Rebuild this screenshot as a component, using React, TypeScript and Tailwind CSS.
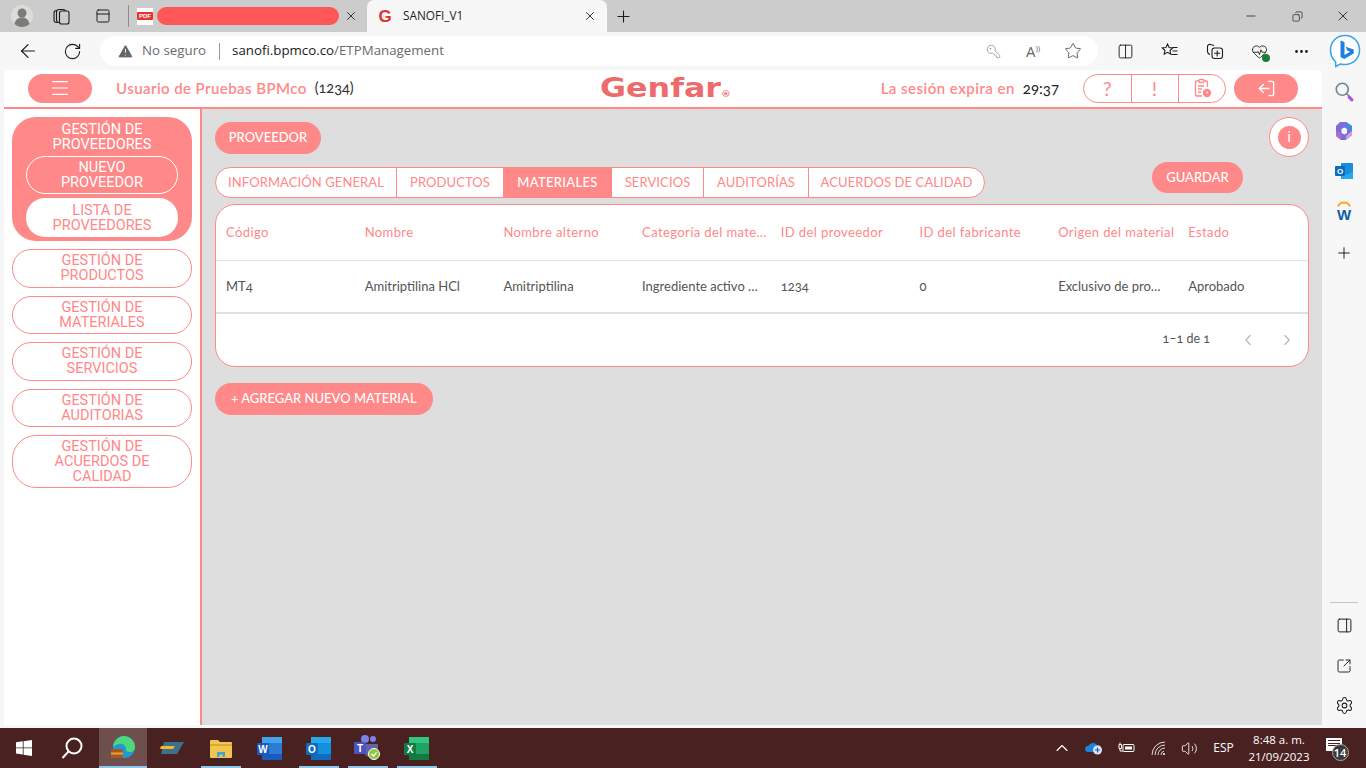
import React from "react";
import {
  ArrowLeft, RotateCw, TriangleAlert, KeyRound, Star, Columns2, HeartPulse, MoreHorizontal, Search, Plus,
  PanelRight, SquareArrowOutUpRight, Settings, ChevronUp, ChevronLeft, ChevronRight, Volume2, X, Minus,
  Copy, PanelTop, LogOut, Menu,
} from "lucide-react";

const Slot = ({ w, children, className = "" }: { w: number; children?: React.ReactNode; className?: string }) => (
  <div style={{ width: w }} className={"flex shrink-0 items-center justify-center " + className}>{children}</div>
);

const RW = "font-['Lato','Open_Sans',sans-serif] [font-variant-numeric:oldstyle-nums]";
const RB = "font-['Roboto',sans-serif]";

function TabStrip() {
  return (
    <div className="flex h-8 shrink-0 items-center bg-[#cccccc] text-[#1c1c1c]">
      <Slot w={44}>
        <svg width="22" height="22" viewBox="0 0 22 22">
          <circle cx="11" cy="11" r="11" fill="#dcdcd8" />
          <circle cx="11" cy="8" r="4.5" fill="#7b7b78" />
          <path d="M3.5 19c1-5 4-6.5 7.5-6.5s6.500 1.500 7.500 6.500c-2 2-5 3-7.500 3s-5.500-1-7.500-3z" fill="#7b7b78" />
        </svg>
      </Slot>
      <Slot w={34}>
        <svg width="17" height="17" viewBox="0 0 17 17" fill="#cccccc" stroke="#1c1c1c" strokeWidth="1.100">
          <rect x="1" y="2.500" width="9" height="12" rx="2.500" />
          <rect x="3.500" y="1.500" width="9" height="13" rx="2.500" />
          <rect x="6.500" y="3" width="9.500" height="13" rx="2" />
        </svg>
      </Slot>
      <Slot w={50}><PanelTop size={16} strokeWidth={1.5} /></Slot>
      <div className="h-[22px] w-px bg-[#8d8d8d]" />
      <div className="ml-[8px] flex h-[17px] w-[16px] items-center justify-center bg-white">
        <span className="w-full rounded-[1px] bg-[#e3342f] text-center font-['Liberation_Sans',sans-serif] text-[6px] font-bold leading-[8px] text-white">PDF</span>
      </div>
      <div className="ml-[4px] h-[18px] w-[182px] rounded-[9px] bg-[#ff5757]" />
      <Slot w={24}><X size={14} strokeWidth={1.7} className="text-[#333]" /></Slot>
      <div className="ml-[4px] flex h-8 w-[240px] items-center rounded-t-[7px] bg-[#f7f7f7]">
        <span className="ml-[10px] w-[16px] text-center font-['Liberation_Sans',sans-serif] text-[17px] font-bold leading-none text-[#e53030]">G</span>
        <span className="ml-[10px] font-['Open_Sans',sans-serif] text-[11.800px] text-[#222]">SANOFI_V1</span>
        <div className="ml-auto mr-[5px] flex w-[24px] justify-center"><X size={14} strokeWidth={1.7} className="text-[#333]" /></div>
      </div>
      <Slot w={34}><Plus size={19} strokeWidth={1.4} className="-translate-x-px" /></Slot>
      <div className="ml-auto flex">
        <Slot w={46}><Minus size={14} strokeWidth={1.3} /></Slot>
        <Slot w={46}><Copy size={11} strokeWidth={1.5} className="-scale-x-100" /></Slot>
        <Slot w={46}><X size={16} strokeWidth={1.3} /></Slot>
      </div>
    </div>
  );
}

function Toolbar() {
  return (
    <div className="flex h-[38px] shrink-0 items-start bg-[#f7f7f7] pt-[4px] text-[#1c1c1c]">
      <Slot w={56} className="h-[30px]"><ArrowLeft size={22} strokeWidth={1.3} /></Slot>
      <Slot w={32} className="h-[30px]"><RotateCw size={19} strokeWidth={1.4} /></Slot>
      <div className="ml-[12px] flex h-[30px] w-[998px] items-center rounded-full bg-white font-['Open_Sans',sans-serif] text-[13.300px]">
        <TriangleAlert size={17} fill="#666" stroke="#fff" strokeWidth={1.4} className="ml-[17px]" />
        <span className="ml-[8px] text-[#6b6b6b]">No seguro</span>
        <div className="ml-[13px] h-[17px] w-px bg-[#9a9a9a]" />
        <span className="ml-[12px] text-[#1a1a1a]">sanofi.bpmco.co<span className="text-[#6b6b6b]">/ETPManagement</span></span>
        <div className="ml-auto mr-[5px] flex text-[#8a8a8a]">
          <Slot w={40}><KeyRound size={15} strokeWidth={1.2} className="-scale-x-100" /></Slot>
          <Slot w={40}><span className="font-['Open_Sans',sans-serif] text-[15px] leading-none text-[#666]">A<span className="align-super text-[8px]">))</span></span></Slot>
          <Slot w={40}><Star size={18} strokeWidth={1.2} className="text-[#555]" /></Slot>
        </div>
      </div>
      <div className="ml-[4px] flex h-[30px] items-center">
        <Slot w={46}><Columns2 size={17} strokeWidth={1.3} /></Slot>
        <Slot w={44}>
          <svg width="18" height="18" viewBox="0 0 18 18" fill="none" stroke="#1c1c1c" strokeWidth="1.100">
            <path d="M6.500 2l1.600 3.600 3.600.4-2.700 2.500.8 3.700-3.300-1.900-3.300 1.900.8-3.700L1.300 6l3.600-.4z" />
            <path d="M11.500 5.500h5M11.500 9h5M10.500 12.500h6" />
          </svg>
        </Slot>
        <Slot w={46}>
          <svg width="18" height="18" viewBox="0 0 18 18" fill="none" stroke="#1c1c1c" strokeWidth="1.100">
            <path d="M4 12.500c-1.500-.5-2.500-1.200-2.500-3V4.500C1.500 3 3 2 4.500 2.500L8 3.500" />
            <rect x="6" y="6" width="10.500" height="10.500" rx="2.500" />
            <path d="M11.200 8.500v6M8.200 11.250h6" />
          </svg>
        </Slot>
        <Slot w={42}>
          <div className="relative">
            <HeartPulse size={17} strokeWidth={1.2} />
            <div className="absolute -bottom-[2px] -right-[2px] h-[8px] w-[8px] rounded-full bg-[#1b7f37]" />
          </div>
        </Slot>
        <Slot w={43}><MoreHorizontal size={17} strokeWidth={2} /></Slot>
        <Slot w={43}>
          <svg width="32" height="34" viewBox="0 0 32 34">
            <path d="M16 1.500C7.500 1.500 1.500 8 1.500 16c0 5 2 9 5 11.500l.3 5 5-2.600c1.400.4 2.800.6 4.200.6 8.500 0 14.500-6.500 14.500-14.500S24.500 1.500 16 1.500z" fill="#fff" stroke="#38a7ee" strokeWidth="1.600" />
            <path d="M11.500 6.500l4 1.500v13l5.500-3.200-2.800-1.300-1.500-3.800 8 2.800v4l-9.500 5.500-3.700-2z" fill="#1f7fe0" />
          </svg>
        </Slot>
      </div>
    </div>
  );
}

const navItems = [
  ["GESTIÓN DE", "PRODUCTOS"],
  ["GESTIÓN DE", "MATERIALES"],
  ["GESTIÓN DE", "SERVICIOS"],
  ["GESTIÓN DE", "AUDITORIAS"],
  ["GESTIÓN DE", "ACUERDOS DE", "CALIDAD"],
];

function Sidebar() {
  return (
    <aside className={"flex w-[198px] shrink-0 flex-col gap-[8px] border-r-2 border-[#ff8888] bg-white px-[8px] pt-[8px] text-center text-[14.500px] leading-[15px] " + RB}>
      <div className="flex h-[124px] flex-col items-center rounded-[24px] bg-[#ff8888] px-[14px] pt-[5px] text-white">
        <div>GESTIÓN DE<br />PROVEEDORES</div>
        <div className="mt-[4px] flex h-[38px] w-full items-center justify-center rounded-[19px] border border-white">
          <span>NUEVO<br />PROVEEDOR</span>
        </div>
        <div className="mt-[4px] flex h-[39px] w-full items-center justify-center rounded-[19px] bg-white text-[#ff8888]">
          <span>LISTA DE<br />PROVEEDORES</span>
        </div>
      </div>
      {navItems.map((lines) => (
        <div key={lines[1]} className={"flex items-center justify-center border border-[#ff8888] bg-white text-[#ff8888] " + (lines.length === 3 ? "h-[53px] rounded-[24px]" : "h-[38.500px] rounded-[19px]")}>
          <span>{lines.map((l, i) => <React.Fragment key={l}>{i > 0 && <br />}{l}</React.Fragment>)}</span>
        </div>
      ))}
    </aside>
  );
}

const tabs = [
  ["INFORMACIÓN GENERAL", 181],
  ["PRODUCTOS", 107],
  ["MATERIALES", 108],
  ["SERVICIOS", 92],
  ["AUDITORÍAS", 105],
  ["ACUERDOS DE CALIDAD", 176],
] as const;

const headers = ["Código", "Nombre", "Nombre alterno", "Categoría del material", "ID del proveedor", "ID del fabricante", "Origen del material", "Estado"];
const cells = ["MT4", "Amitriptilina HCl", "Amitriptilina", "Ingrediente activo farmacéutico", "1234", "0", "Exclusivo de proveedor", "Aprobado"];
const gridCols = "grid grid-cols-[repeat(6,138.7px)_130px_1fr] px-[10px]";

function Content() {
  return (
    <main className={"flex min-w-0 flex-1 flex-col bg-[#dedede] pl-[13px] pr-[13px] pt-[8px] " + RW}>
      <div className="flex items-start justify-between">
        <button className="mt-[5px] h-[32px] w-[106px] rounded-full bg-[#ff8888] text-[13px] font-medium text-white">PROVEEDOR</button>
        <div className="flex h-[40px] w-[40px] items-center justify-center rounded-full border border-[#ff8888] bg-white">
          <div className="flex h-[23px] w-[23px] items-center justify-center rounded-full bg-[#ff8888] font-['Roboto',sans-serif] text-[15px] font-normal leading-none text-white">i</div>
        </div>
      </div>
      <div className="mt-[5px] flex h-[42px] items-start justify-between">
        <div className="mt-[5px] flex h-[31px] overflow-hidden rounded-full border border-[#ff8888] bg-white text-[13px] tracking-[0.1px]">
          {tabs.map(([t, w], i) => (
            <div key={t} style={{ width: w - (i === 0 ? 1 : 0) }} className={"flex items-center justify-center " + (i > 0 ? "border-l border-[#ff8888] " : "") + (t === "MATERIALES" ? "bg-[#ff8888] font-medium tracking-[0.3px] text-white" : "text-[#ff8888]")}>{t}</div>
          ))}
        </div>
        <button className="mr-[66px] h-[31px] w-[91px] rounded-full bg-[#ff8888] text-[13px] font-medium text-white">GUARDAR</button>
      </div>
      <section className="h-[163px] w-[1094px] overflow-hidden rounded-[20px] border border-[#ff8888] bg-white text-[13px]">
        <div className={gridCols + " h-[56px] items-center border-b border-[#e0e0e0] tracking-[0.4px] text-[#ff8888]"}>
          {headers.map((h, i) => <div key={h} className={i === 3 ? "truncate pr-[11px]" : "truncate"}>{h}</div>)}
        </div>
        <div className={gridCols + " h-[53px] items-center border-b-2 border-[#e0e0e0] text-[#555]"}>
          {cells.map((c, i) => <div key={c} className={"truncate " + (i === 3 ? "pr-[20px]" : i === 6 ? "pr-[26px]" : "")}>{c}</div>)}
        </div>
        <div className="flex h-[51px] items-center justify-end text-[#555]">
          <span className="text-[12.500px]">1–1 de 1</span>
          <ChevronLeft size={18} strokeWidth={1.5} className="ml-[29px] text-[#b4b4b4]" />
          <ChevronRight size={18} strokeWidth={1.5} className="ml-[21px] mr-[12px] text-[#b4b4b4]" />
        </div>
      </section>
      <button className="mt-[16px] h-[32px] w-[218px] rounded-full bg-[#ff8888] text-[13px] font-medium text-white">+ AGREGAR NUEVO MATERIAL</button>
    </main>
  );
}

function Header() {
  return (
    <header className={"flex h-[39px] shrink-0 items-center border-b-2 border-[#ff8888] bg-white pb-[3px] pt-[2px] " + RW}>
      <div className="flex w-[596px] shrink-0 items-center pl-[24px]">
        <div className="flex h-[29px] w-[64px] items-center justify-center rounded-full bg-[#ff8888]">
          <Menu size={22} strokeWidth={1.3} className="text-white" />
        </div>
        <span className="ml-[24px] text-[15px] font-semibold tracking-[0.42px] text-[#ff8888]">Usuario de Pruebas BPMco</span>
        <span className="ml-[8px] text-[14.500px] text-[#333]">(1234)</span>
      </div>
      <div className="flex w-[130px] origin-left scale-x-[1.22] items-baseline font-['DejaVu_Sans',sans-serif] text-[26px] font-bold leading-none text-[#ee6b6b]">
        Genfar<span className="text-[8px] leading-none">®</span>
      </div>
      <div className="ml-auto flex items-center pr-[24px]">
        <span className="text-[15px] font-semibold tracking-[0.47px] text-[#ff8888]">La sesión expira en</span>
        <span className="ml-[8px] text-[15px] text-[#222]">29:37</span>
        <div className="ml-[24px] flex h-[29px] w-[143px] overflow-hidden rounded-full border border-[#ff8888] text-[#ff8888]">
          <div className="flex flex-1 items-center justify-center text-[20px] font-normal leading-none">?</div>
          <div className="flex w-[48px] items-center justify-center border-x border-[#ff8888] text-[20px] leading-none">!</div>
          <div className="flex flex-1 items-center justify-center">
            <svg width="20" height="20" viewBox="0 0 20 20" fill="none" stroke="#ff8888" strokeWidth="1.300">
              <rect x="7" y="1.500" width="5" height="3" rx="1" />
              <path d="M7 3H4.500A1 1 0 0 0 3.500 4v13a1 1 0 0 0 1 1H10M12 3h2.500a1 1 0 0 1 1 1v5" />
              <path d="M6 8h6M6 11h4M6 14h3" />
              <circle cx="15" cy="15" r="3.500" fill="#ff8888" />
              <path d="M15 13.500V15h1.300" stroke="#fff" strokeWidth="0.900" />
            </svg>
          </div>
        </div>
        <div className="ml-[8px] flex h-[29px] w-[64px] items-center justify-center rounded-full bg-[#ff8888]">
          <LogOut size={19} strokeWidth={1.8} className="-scale-x-100 text-white" />
        </div>
      </div>
    </header>
  );
}

function Rail() {
  return (
    <div className="flex w-[44px] shrink-0 flex-col items-center justify-between pb-[10px] pt-[11px] text-[#1c1c1c]">
      <div className="flex flex-col items-center gap-[19px]">
        <div className="relative h-[20px] w-[20px]">
          <Search size={18} strokeWidth={2.200} className="text-[#6f8794]" />
          <div className="absolute bottom-[1px] right-[0px] h-[3px] w-[7px] rotate-45 rounded-full bg-[#b14fd0]" />
        </div>
        <svg width="22" height="22" viewBox="0 0 22 22">
          <path d="M7 2h6l6 4v9l-6 5H8l-5-4V6z" fill="#7a6fd6" />
          <path d="M13 2l6 4v5l-6-3z" fill="#3f8be0" />
          <path d="M3 11l5 3v6l-5-4z" fill="#b36bd8" />
          <path d="M13 16l6-5v4l-6 5z" fill="#d89ad8" />
          <path d="M8.500 9l3-1.500L14 9v4l-2.500 1.500L8.500 13z" fill="#f7f7f7" />
        </svg>
        <svg width="20" height="20" viewBox="0 0 20 20">
          <rect x="7" y="2" width="12" height="16" rx="1" fill="#1490df" />
          <path d="M7 10l6 4 6-4v8H7z" fill="#28a8ea" />
          <rect x="1" y="5" width="10" height="10" rx="1" fill="#0f6cbd" />
          <text x="6" y="13" textAnchor="middle" fontSize="8" fontWeight="700" fontFamily="Liberation Sans, sans-serif" fill="#fff">O</text>
        </svg>
        <svg width="22" height="22" viewBox="0 0 22 22">
          <path d="M5 6.500a6.500 6.500 0 0 1 12 0" fill="none" stroke="#f5a623" strokeWidth="1.800" />
          <text x="11" y="20" textAnchor="middle" fontSize="15" fontWeight="700" fontFamily="Liberation Sans, sans-serif" fill="#0b5cab">W</text>
        </svg>
        <Plus size={18} strokeWidth={1.300} className="mt-[3px]" />
      </div>
      <div className="flex flex-col items-center">
        <div className="mb-[14px] h-px w-[28px] bg-[#c4c4c4]" />
        <PanelRight size={17} strokeWidth={1.400} />
        <SquareArrowOutUpRight size={16} strokeWidth={1.400} className="mt-[24px]" />
        <Settings size={19} strokeWidth={1.300} className="mt-[22px]" />
      </div>
    </div>
  );
}

const Task = ({ w, on, active, children }: { w: number; on?: boolean; active?: boolean; children?: React.ReactNode }) => (
  <div style={{ width: w }} className={"relative flex h-full shrink-0 items-center justify-center " + (active ? "bg-[#6f4f4d]" : "")}>
    {children}
    {on && <div className="absolute bottom-0 left-1/2 h-[2px] w-[40px] -translate-x-1/2 bg-[#8fc5e8]" />}
    {active && <div className="absolute bottom-0 left-0 h-[2px] w-full bg-[#8fc5e8]" />}
  </div>
);

const Office = ({ letter, dark, mid, light, rx = 0 }: { letter: string; dark: string; mid: string; light: string; rx?: number }) => (
  <svg width="25" height="23" viewBox="0 0 25 23">
    <rect x="5" y="0" width="20" height="23" rx={rx} fill={mid} />
    <rect x="5" y="0" width="20" height="6" fill={light} />
    <rect x="5" y="17" width="20" height="6" fill={dark} />
    <rect x="0" y="6" width="12" height="12" rx="1" fill={dark} />
    <text x="6" y="15.500" textAnchor="middle" fontSize="10" fontWeight="700" fontFamily="Liberation Sans, sans-serif" fill="#fff">{letter}</text>
  </svg>
);

function Taskbar() {
  return (
    <div className="flex h-10 shrink-0 items-center bg-[#4a2121] font-['Open_Sans',sans-serif] text-white">
      <Task w={48}>
        <svg width="16" height="16" viewBox="0 0 16 16" fill="#fff"><path d="M0 2.300l6.800-1v6.200H0zM7.600 1.200L16 0v7.500H7.600zM0 8.300h6.800v6.300l-6.800-1zM7.600 8.300H16V16l-8.400-1.200z" /></svg>
      </Task>
      <Task w={51}>
        <svg width="24" height="24" viewBox="0 0 24 24" fill="none" stroke="#fff" strokeWidth="2" className="mr-[3px]"><circle cx="14" cy="10" r="7.500" /><path d="M8.500 15.500L2.500 22" /></svg>
      </Task>
      <Task w={48} active>
        <svg width="26" height="26" viewBox="0 0 26 26">
          <circle cx="14" cy="12" r="11" fill="#1d9bd8" />
          <path d="M3 12C4 5 9 1 14 1c6 0 11 5 11 11 0 3-2 5-5 5s-4-1-4-3c0-4-4-6-7-5-3 .7-5 2-6 3z" fill="#4fd87a" />
          <rect x="1" y="14" width="12" height="9" rx="1" fill="#a8551e" />
          <rect x="1" y="17.500" width="12" height="2" fill="#e8a33d" />
        </svg>
      </Task>
      <Task w={49}>
        <svg width="24" height="12" viewBox="0 0 24 12"><path d="M4 0h20l-7 12H1z" fill="#3d6f8e" /><path d="M1 4h14l-2 3H0z" fill="#f5b921" /></svg>
      </Task>
      <Task w={49} on>
        <svg width="22" height="19" viewBox="0 0 22 19"><path d="M0 2a1 1 0 0 1 1-1h7l2 2h11a1 1 0 0 1 1 1v14a1 1 0 0 1-1 1H1a1 1 0 0 1-1-1z" fill="#f0c552" /><path d="M0 5h22v2H0z" fill="#e2a72e" /><path d="M7 18v-5h8v5h-2.500v-2.500h-3V18z" fill="#3ea3dc" /></svg>
      </Task>
      <Task w={49}><Office letter="W" dark="#185abd" mid="#2b7cd3" light="#41a5ee" /></Task>
      <Task w={49} on><Office letter="O" dark="#0f6cbd" mid="#1490df" light="#28a8ea" /></Task>
      <Task w={49} on>
        <svg width="27" height="26" viewBox="0 0 27 26">
          <circle cx="19" cy="4" r="3" fill="#7b83eb" />
          <circle cx="11" cy="4" r="4" fill="#7b83eb" />
          <path d="M10 9h14v8a5 5 0 0 1-5 5h-3a6 6 0 0 1-6-6z" fill="#6264a7" />
          <rect x="0" y="7" width="12" height="12" rx="1" fill="#4b53bc" />
          <text x="6" y="16.500" textAnchor="middle" fontSize="10" fontWeight="700" fontFamily="Liberation Sans, sans-serif" fill="#fff">T</text>
          <circle cx="20" cy="19" r="5.500" fill="#8dc63f" stroke="#fff" strokeWidth="1" />
          <path d="M17.500 19l2 2 3-3.500" stroke="#fff" strokeWidth="1.300" fill="none" />
        </svg>
      </Task>
      <Task w={49} on><Office letter="X" dark="#107c41" mid="#21a366" light="#33c481" /></Task>
      <div className="ml-auto flex h-full items-center">
        <Slot w={32}><ChevronUp size={20} strokeWidth={1.300} /></Slot>
        <Slot w={32}>
          <svg width="18" height="14" viewBox="0 0 18 14"><path d="M3 11a3 3 0 0 1 .3-6A5 5 0 0 1 12 4a3.500 3.500 0 0 1 1 7z" fill="#1b86d8" /><circle cx="12.500" cy="9" r="4.500" fill="#d8e8f6" /><path d="M10 9h5M12.500 6.500v5" stroke="#1b5fa8" strokeWidth="1.200" /></svg>
        </Slot>
        <Slot w={32}>
          <svg width="17" height="12" viewBox="0 0 17 12" fill="none" stroke="#fff"><rect x="5" y="2.500" width="11" height="7" rx="1" /><rect x="7" y="4.500" width="7" height="3" fill="#fff" stroke="none" /><path d="M1 2.500h2.500v4H1zM2 .5v2M2 6.500V9h3" /></svg>
        </Slot>
        <Slot w={34}>
          <svg width="16" height="15" viewBox="0 0 16 15" fill="none" stroke="#ddd" strokeWidth="1">
            <path d="M1 14A13 13 0 0 1 14 1M4 14A10 10 0 0 1 14 4M7 14a7 7 0 0 1 7-7M10 14a4 4 0 0 1 3-3.800" />
            <circle cx="13" cy="13" r="1" fill="#fff" stroke="none" />
          </svg>
        </Slot>
        <Slot w={27}><Volume2 size={17} strokeWidth={1.200} /></Slot>
        <Slot w={41}><span className="text-[12px]">ESP</span></Slot>
        <Slot w={70}>
          <div className="text-center text-[11.500px] leading-[17px]">8:48 a. m.<br />21/09/2023</div>
        </Slot>
        <Slot w={43}>
          <div className="relative h-[26px] w-[26px]">
            <div className="absolute right-[7px] top-[3px] flex h-[13px] w-[16px] flex-col gap-[1.500px] bg-white px-[2px] pt-[2px]">
              <div className="h-px bg-[#4a2121]" /><div className="h-px bg-[#4a2121]" /><div className="h-px bg-[#4a2121]" />
            </div>
            <div className="absolute bottom-0 right-0 flex h-[17px] w-[17px] items-center justify-center rounded-full border border-[#aaa] bg-[#3a3a3a] text-[11px] font-semibold leading-none">14</div>
          </div>
        </Slot>
        <div className="w-[9px]" />
      </div>
    </div>
  );
}

export default function App() {
  return (
    <div className="flex h-[768px] w-[1366px] flex-col overflow-hidden bg-[#f7f7f7]">
      <TabStrip />
      <Toolbar />
      <div className="flex h-[655px] shrink-0">
        <div className="ml-[4px] flex w-[1318px] flex-col overflow-hidden rounded-t-[5px] bg-white">
          <Header />
          <div className="flex min-h-0 flex-1">
            <Sidebar />
            <Content />
          </div>
        </div>
        <Rail />
      </div>
      <div className="h-[3px] shrink-0 bg-[#f7f7f7]" />
      <Taskbar />
    </div>
  );
}
